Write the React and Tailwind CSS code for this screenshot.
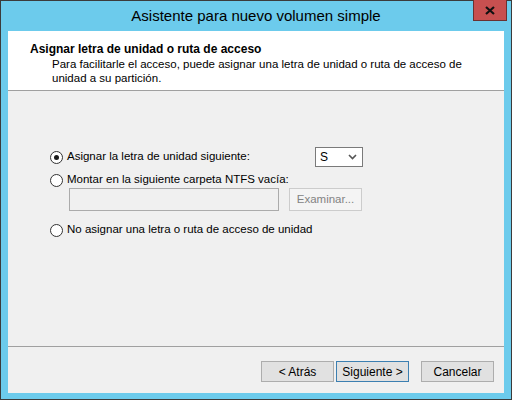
import React from "react";

const Radio = ({ checked }) => (
  <span className="w-[13px] h-[13px] rounded-full border border-[#333] bg-white flex items-center justify-center shrink-0">
    {checked && <span className="w-[5px] h-[5px] rounded-full bg-[#1a1a1a]"></span>}
  </span>
);

const Btn = ({ children, primary }) => (
  <button
    className={`w-[73px] h-[21px] bg-[#e1e1e1] border text-[12px] text-black flex items-center justify-center ${
      primary ? "border-[#3c7fb1]" : "border-[#adadad]"
    }`}
  >
    {children}
  </button>
);

export default function App() {
  return (
    <div
      className="w-[512px] h-[400px] bg-[#6ccbec] border border-[#3b3b3b] flex flex-col"
      style={{ fontFamily: '"Liberation Sans", Arial, sans-serif' }}
    >
      {/* title bar */}
      <div className="h-[30px] relative flex items-center justify-center shrink-0">
        <span className="text-[15px] text-black">Asistente para nuevo volumen simple</span>
        <div className="absolute right-[4px] -top-px w-[34px] h-[21px] bg-[#c75050] border border-[#6b3131] border-t-0 flex items-center justify-center">
          <svg width="10" height="9" viewBox="0 0 10 9">
            <path d="M1 1 L9 8 M9 1 L1 8" stroke="#111" strokeWidth="2.2" />
          </svg>
        </div>
      </div>

      {/* client area */}
      <div className="mx-[7px] flex-1 bg-[#f0f0f0] flex flex-col mb-[6px]">
        <div className="bg-white h-[60px] border-b border-[#a0a0a0] pl-[22px] pt-[11px] shrink-0">
          <div className="text-[12px] font-bold text-black leading-[15px]">
            Asignar letra de unidad o ruta de acceso
          </div>
          <div className="text-[11.5px] text-black leading-[14px] pl-[22px] whitespace-nowrap">
            Para facilitarle el acceso, puede asignar una letra de unidad o ruta de acceso de
            <br />
            unidad a su partición.
          </div>
        </div>

        <div className="flex-1 pl-[42px] pt-[56px] text-[11.5px] text-black">
          <div className="flex items-center h-[20px]">
            <Radio checked />
            <span className="ml-[4px] w-[248px]">Asignar la letra de unidad siguiente:</span>
            <div className="w-[48px] h-[20px] border border-[#7a7a7a] bg-white flex items-center justify-between pl-[4px] pr-[5px] text-[12px]">
              <span>S</span>
              <svg width="9" height="6" viewBox="0 0 9 6">
                <path d="M1 1 L4.5 4.5 L8 1" stroke="#555" strokeWidth="1.6" fill="none" />
              </svg>
            </div>
          </div>
          <div className="flex items-center h-[16px] mt-[5px]">
            <Radio />
            <span className="ml-[4px]">Montar en la siguiente carpeta NTFS vacía:</span>
          </div>
          <div className="flex items-center ml-[19px]">
            <div className="w-[210px] h-[23px] border border-[#ababab] bg-[#f0f0f0]"></div>
            <div className="ml-[10px] w-[73px] h-[23px] border border-[#cccccc] bg-[#f4f4f4] text-[#838383] flex items-center justify-center">
              Examinar...
            </div>
          </div>
          <div className="flex items-center h-[16px] mt-[11px]">
            <Radio />
            <span className="ml-[4px]">No asignar una letra o ruta de acceso de unidad</span>
          </div>
        </div>

        <div className="h-[47px] border-t border-[#a0a0a0] flex items-start pt-[14px] pl-[253px] shrink-0">
          <Btn>&lt; Atrás</Btn>
          <div className="ml-[2px]">
            <Btn primary>Siguiente &gt;</Btn>
          </div>
          <div className="ml-[12px]">
            <Btn>Cancelar</Btn>
          </div>
        </div>
      </div>
    </div>
  );
}
